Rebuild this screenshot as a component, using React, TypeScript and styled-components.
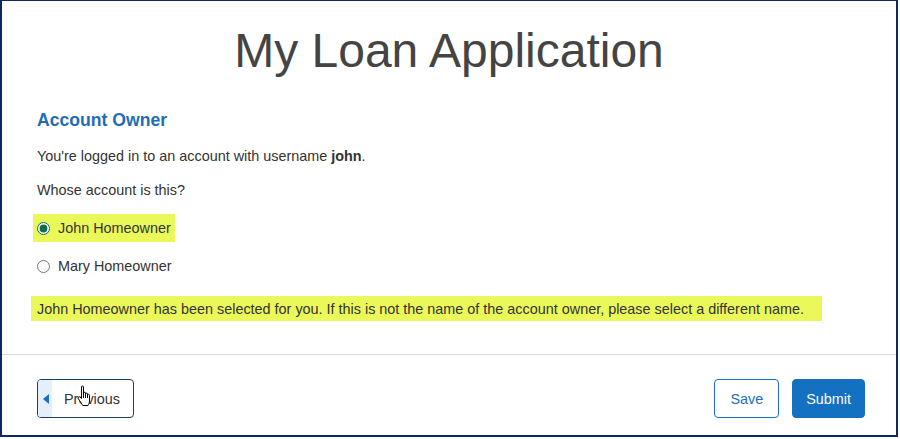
import React from 'react'
import styled, { createGlobalStyle } from 'styled-components'

const GlobalStyle = createGlobalStyle`
  html, body {
    margin: 0;
    padding: 0;
    background: #ffffff;
  }
  body {
    font-family: "Liberation Sans", Arial, sans-serif;
  }
`

const Frame = styled.div`
  box-sizing: border-box;
  width: 898px;
  height: 437px;
  border: 2px solid #0d2a5c;
  border-top-width: 1px;
  background: #fff;
  display: flex;
  flex-direction: column;
`

const Title = styled.h1`
  margin: 25.5px 0 0;
  font-size: 48px;
  line-height: 48px;
  font-weight: 400;
  color: #444;
  text-align: center;
`

const Body = styled.div`
  padding: 0 31px 0 35px;
  display: flex;
  flex-direction: column;
`

const SectionTitle = styled.h2`
  margin: 36.5px 0 0;
  font-size: 17.6px;
  line-height: 18px;
  font-weight: 700;
  color: #1f6db5;
`

const Text = styled.p<{ $gap: number }>`
  margin: ${p => p.$gap}px 0 0;
  font-size: 14.4px;
  line-height: 20px;
  color: #333;

  b {
    font-weight: 700;
  }
`

const Option = styled.label<{ $gap: number; $marked?: boolean }>`
  align-self: flex-start;
  display: flex;
  align-items: center;
  gap: 8px;
  margin: ${p => p.$gap}px 0 0 -4px;
  padding: 4px;
  font-size: 14.4px;
  line-height: 20px;
  color: #333;
  background: ${p => (p.$marked ? '#ebf85a' : 'transparent')};

  input {
    margin: 0;
    width: 13px;
    height: 13px;
    accent-color: #126b4c;
  }
`

const Notice = styled.div`
  align-self: flex-start;
  margin: 16px 0 0 -6px;
  padding: 2.5px 18px 2.5px 6px;
  font-size: 14.4px;
  line-height: 20px;
  color: #333;
  background: #ebf85a;
`

const Divider = styled.hr`
  margin: 33px 0 0;
  border: 0;
  border-top: 1px solid #d9d9d9;
`

const Footer = styled.div`
  display: flex;
  align-items: center;
  padding: 24px 31px 0 35px;
  gap: 13px;
`

const Spacer = styled.div`
  flex: 1;
`

const Button = styled.button<{ $primary?: boolean }>`
  box-sizing: border-box;
  height: 39px;
  padding: 0 ${p => (p.$primary ? 13 : 15)}px;
  font-family: inherit;
  font-size: 14.4px;
  border-radius: 4px;
  border: 1px solid #1a6fc0;
  background: ${p => (p.$primary ? '#1470c0' : '#fff')};
  color: ${p => (p.$primary ? '#fff' : '#1a6fc0')};
  cursor: pointer;
`

const BackButton = styled.button`
  position: relative;
  box-sizing: border-box;
  width: 97px;
  height: 39px;
  display: flex;
  align-items: stretch;
  padding: 0;
  font-family: inherit;
  font-size: 14.4px;
  color: #333;
  border: 1px solid #1d3f5e;
  border-radius: 4px;
  background: #fff;
  overflow: visible;
`

const Arrow = styled.span`
  width: 14px;
  background: #e4effa;
  border-radius: 3px 0 0 3px;
  display: flex;
  align-items: center;
  justify-content: center;

  &::before {
    content: '';
    border-style: solid;
    border-width: 5px 6px 5px 0;
    border-color: transparent #1a6fc0 transparent transparent;
    margin-left: 1px;
  }
`

const BackLabel = styled.span`
  display: flex;
  align-items: center;
  padding-left: 12px;
`

const Cursor = styled.svg`
  position: absolute;
  left: 38px;
  top: 5px;
`

const HandCursor = () => (
  <Cursor width="18" height="22" viewBox="0 0 18 22">
    <path
      d="M5.5 2c0-1.4 2-1.4 2 0v7.5V8.2c0-1.3 2-1.3 2 0v1.3-.5c0-1.3 2-1.3 2 0v1 .3c0-1.3 2-1.3 2 0V16c0 2-1 3-1.5 4.5H6.8C5.8 19 4 16 2.3 13.8c-.9-1.2.6-2.8 1.8-1.7L5.5 13.5z"
      fill="#fff"
      stroke="#000"
      strokeWidth="1"
      strokeLinejoin="round"
    />
    <path d="M7.5 9v4M9.5 9.5v3.5M11.5 10v3" stroke="#000" strokeWidth="1" />
  </Cursor>
)

export default function App() {
  return (
    <>
      <GlobalStyle />
      <Frame>
        <Title>My Loan Application</Title>
        <Body>
          <SectionTitle>Account Owner</SectionTitle>
          <Text $gap={17}>
            You're logged in to an account with username <b>john</b>.
          </Text>
          <Text $gap={14}>Whose account is this?</Text>
          <Option $gap={14} $marked>
            <input type="radio" name="owner" defaultChecked />
            John Homeowner
          </Option>
          <Option $gap={10}>
            <input type="radio" name="owner" />
            Mary Homeowner
          </Option>
          <Notice>
            John Homeowner has been selected for you. If this is not the name of the account owner,
            please select a different name.
          </Notice>
        </Body>
        <Divider />
        <Footer>
          <BackButton>
            <Arrow />
            <BackLabel>Previous</BackLabel>
            <HandCursor />
          </BackButton>
          <Spacer />
          <Button>Save</Button>
          <Button $primary>Submit</Button>
        </Footer>
      </Frame>
    </>
  )
}
